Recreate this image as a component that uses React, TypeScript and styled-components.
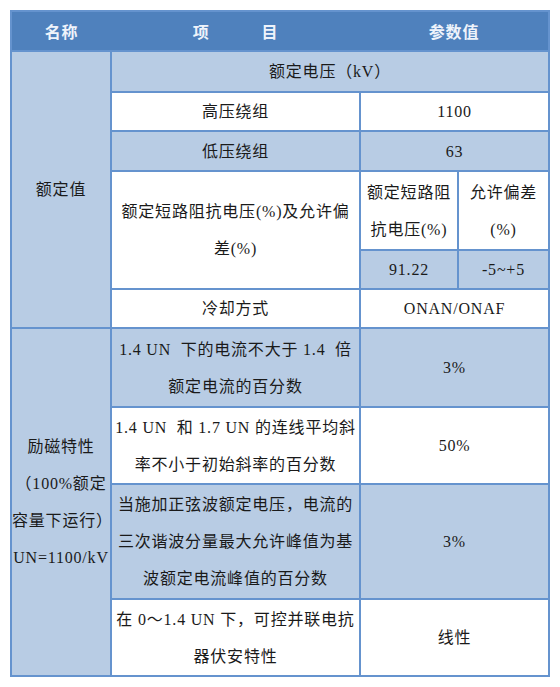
import styled, { createGlobalStyle } from 'styled-components';

const GlobalStyle = createGlobalStyle`
  html, body {
    margin: 0;
    padding: 0;
    background: #ffffff;
  }
`;

const BLUE = '#4f81bd';
const LIGHT = '#b8cce4';
const LINE = '#6593ce';

const Page = styled.div`
  padding: 10px 0 0 10px;
  font-family: 'Liberation Serif', 'Noto Sans CJK SC', serif;
  font-size: 16px;
  letter-spacing: 0.8px;
  color: #1a1a1a;
`;

const Table = styled.table`
  width: 538px;
  border-collapse: collapse;
  table-layout: fixed;
  border: 2px solid ${LINE};
`;

const Col = styled.col<{ $w: number }>`
  width: ${(p) => p.$w}px;
`;

const Row = styled.tr<{ $h: number }>`
  height: ${(p) => p.$h}px;
`;

const HeadCell = styled.th`
  background: ${BLUE};
  color: #eef3fb;
  font-weight: bold;
  font-size: 16px;
  text-align: center;
  vertical-align: middle;
  padding: 0;
  border-bottom: 2px solid ${LINE};
`;

const Gap = styled.span`
  display: inline-block;
  width: 52px;
`;

const Cell = styled.td<{ $shade?: boolean; $nowrap?: boolean }>`
  background: ${(p) => (p.$shade ? LIGHT : '#ffffff')};
  border: 2px solid ${LINE};
  text-align: center;
  vertical-align: middle;
  padding: 0 2px;
  line-height: 37px;
  white-space: ${(p) => (p.$nowrap ? 'nowrap' : 'normal')};
`;

const NameCell = styled(Cell)`
  background: ${LIGHT};
  overflow: visible;
  padding: 0;
`;

export default function App() {
  return (
    <Page>
      <GlobalStyle />
      <Table>
        <colgroup>
          <Col $w={100} />
          <Col $w={249} />
          <Col $w={98} />
          <Col $w={91} />
        </colgroup>
        <thead>
          <Row $h={40}>
            <HeadCell>名称</HeadCell>
            <HeadCell>
              项<Gap />目
            </HeadCell>
            <HeadCell colSpan={2}>参数值</HeadCell>
          </Row>
        </thead>
        <tbody>
          <Row $h={41}>
            <NameCell rowSpan={6}>额定值</NameCell>
            <Cell $shade colSpan={3}>
              额定电压（kV）
            </Cell>
          </Row>
          <Row $h={38}>
            <Cell>高压绕组</Cell>
            <Cell colSpan={2}>1100</Cell>
          </Row>
          <Row $h={40}>
            <Cell $shade>低压绕组</Cell>
            <Cell $shade colSpan={2}>
              63
            </Cell>
          </Row>
          <Row $h={79}>
            <Cell rowSpan={2} $nowrap>
              额定短路阻抗电压(%)及允许偏
              <br />
              差(%)
            </Cell>
            <Cell $nowrap>
              额定短路阻
              <br />
              抗电压(%)
            </Cell>
            <Cell $nowrap>
              允许偏差
              <br />
              (%)
            </Cell>
          </Row>
          <Row $h={39}>
            <Cell $shade>91.22</Cell>
            <Cell $shade>-5~+5</Cell>
          </Row>
          <Row $h={39}>
            <Cell>冷却方式</Cell>
            <Cell colSpan={2}>ONAN/ONAF</Cell>
          </Row>
          <Row $h={79}>
            <NameCell rowSpan={4} $nowrap>
              励磁特性
              <br />
              （100%额定
              <br />
              容量下运行）
              <br />
              UN=1100/kV
            </NameCell>
            <Cell $shade $nowrap>
              1.4 UN&nbsp; 下的电流不大于 1.4&nbsp; 倍
              <br />
              额定电流的百分数
            </Cell>
            <Cell $shade colSpan={2}>
              3%
            </Cell>
          </Row>
          <Row $h={77}>
            <Cell $nowrap>
              1.4 UN&nbsp; 和 1.7 UN 的连线平均斜
              <br />
              率不小于初始斜率的百分数
            </Cell>
            <Cell colSpan={2}>50%</Cell>
          </Row>
          <Row $h={115}>
            <Cell $shade $nowrap>
              当施加正弦波额定电压，电流的
              <br />
              三次谐波分量最大允许峰值为基
              <br />
              波额定电流峰值的百分数
            </Cell>
            <Cell $shade colSpan={2}>
              3%
            </Cell>
          </Row>
          <Row $h={77}>
            <Cell $nowrap>
              在 0～1.4 UN 下，可控并联电抗
              <br />
              器伏安特性
            </Cell>
            <Cell colSpan={2}>线性</Cell>
          </Row>
        </tbody>
      </Table>
    </Page>
  );
}
